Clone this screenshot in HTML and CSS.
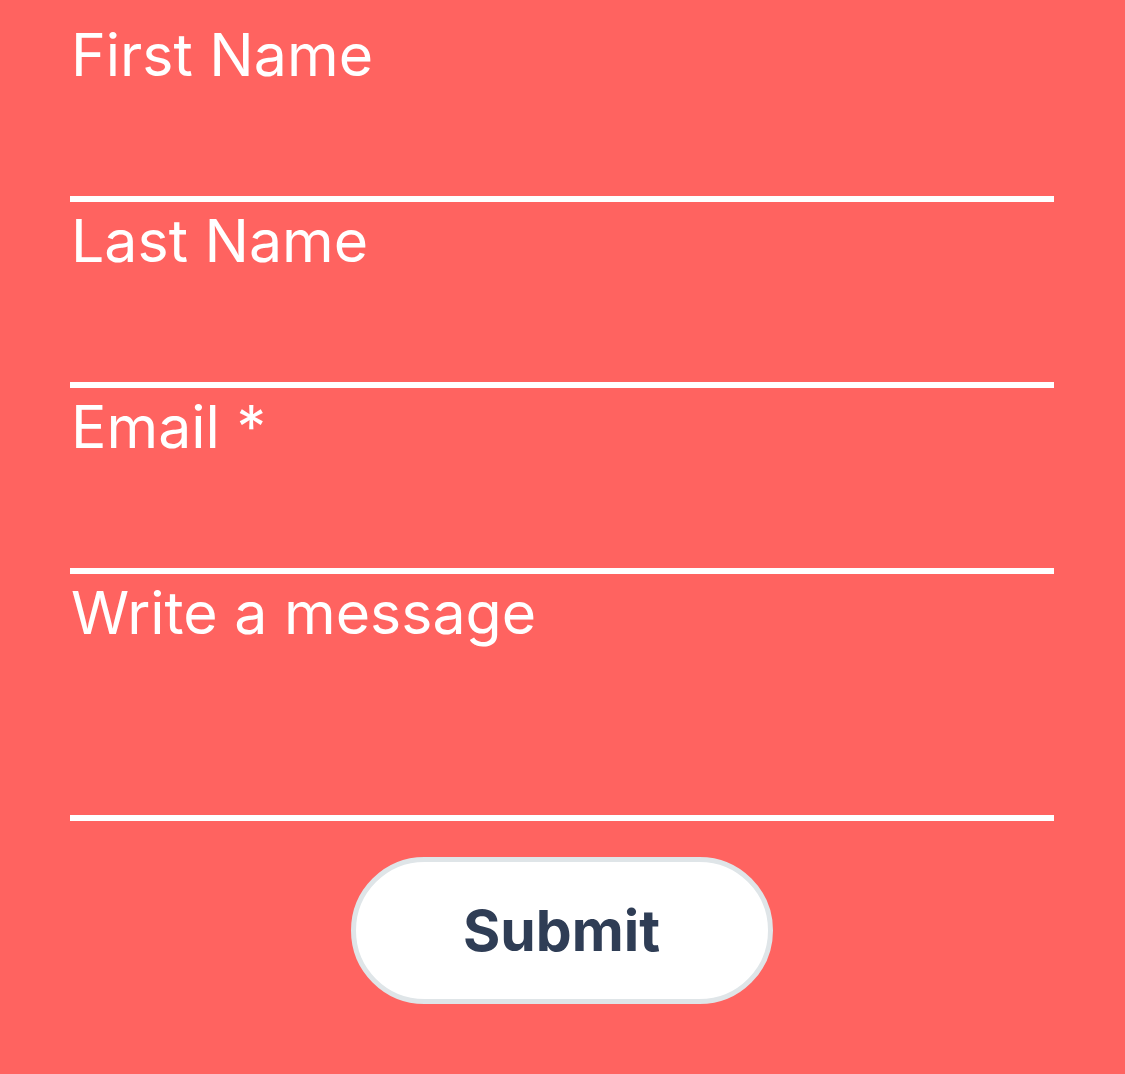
FILE: index.html
```html
<!DOCTYPE html>
<html>
<head>
<meta charset="utf-8">
<link rel="stylesheet" href="styles.css">
</head>
<body>
<form class="form">
  <div class="field">
    <label class="label">First Name</label>
    <div class="input"></div>
  </div>
  <div class="field">
    <label class="label">Last Name</label>
    <div class="input"></div>
  </div>
  <div class="field">
    <label class="label">Email *</label>
    <div class="input"></div>
  </div>
  <div class="field">
    <label class="label">Write a message</label>
    <div class="input textarea"></div>
  </div>
  <div class="actions">
    <button type="button" class="submit">Submit</button>
  </div>
</form>
</body>
</html>
```
FILE: styles.css
```css
html, body {
  margin: 0;
  padding: 0;
  background: #ff6360;
  height: 100%;
}
.form {
  padding: 16px 71px 0 70px;
  font-family: "Inter", "Open Sans", sans-serif;
}
.field {
  display: flex;
  flex-direction: column;
  border-bottom: 6px solid #ffffff;
}
.label {
  color: #ffffff;
  font-size: 59px;
  line-height: 77px;
  height: 80px;
  padding-left: 1px;
}
.input {
  height: 100px;
}
.textarea {
  height: 161px;
}
.actions {
  display: flex;
  justify-content: center;
  padding-top: 36px;
}
.submit {
  width: 422px;
  height: 147px;
  border: 5px solid #dfe5e8;
  border-radius: 74px;
  background: #ffffff;
  color: #2f3d55;
  font-family: "Inter", "Open Sans", sans-serif;
  font-weight: 700;
  font-size: 57px;
  padding: 0;
  margin-left: -1px;
}
```
